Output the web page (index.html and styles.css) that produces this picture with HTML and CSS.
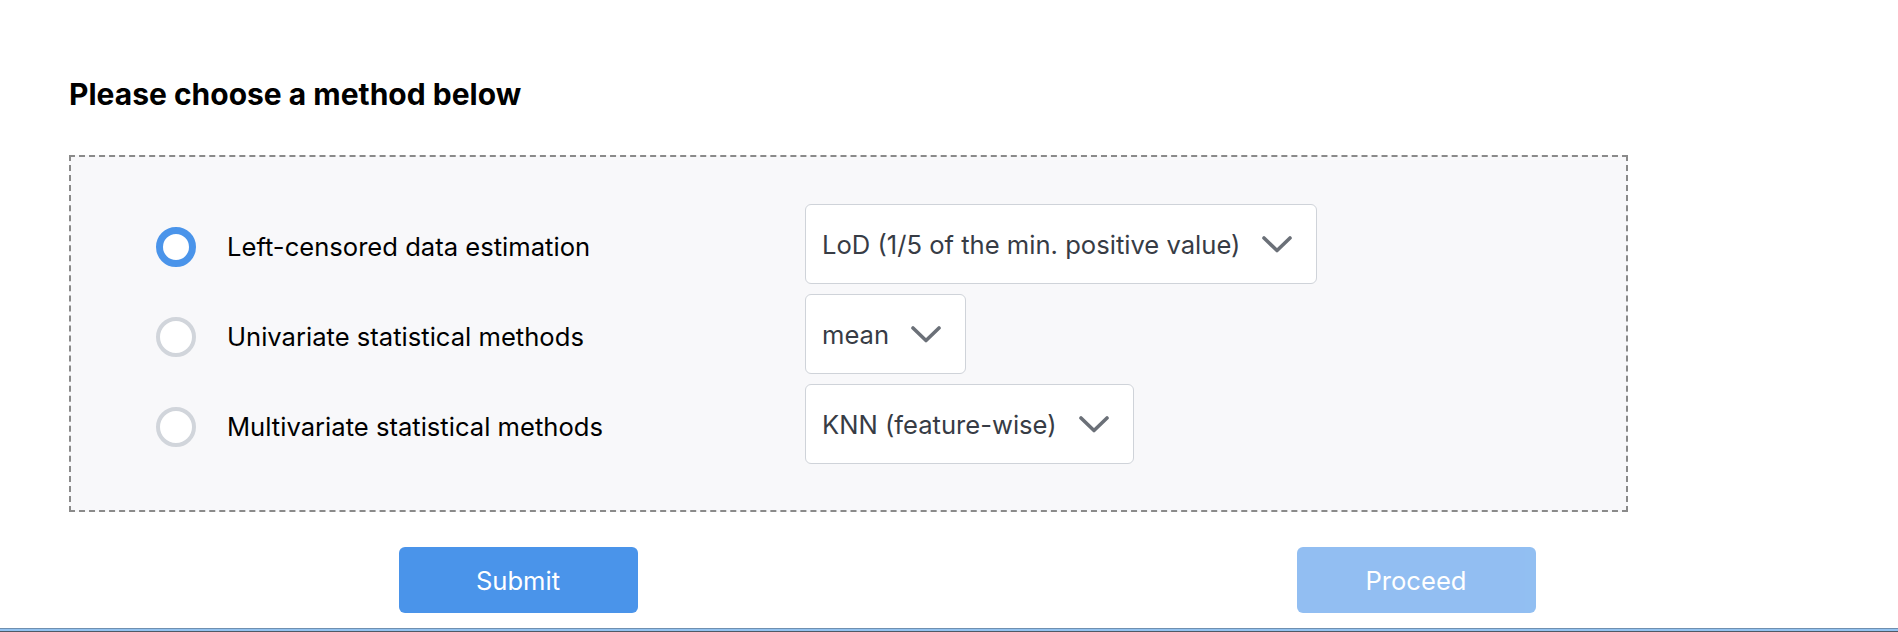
FILE: index.html
```html
<!DOCTYPE html>
<html lang="en">
<head>
    <meta charset="UTF-8">
    <meta name="viewport" content="width=device-width, initial-scale=1.0">
    <title>Imputation Method</title>
    <link rel="stylesheet" href="styles.css">
</head>
<body>
    <main class="page">
        <h3 class="title">Please choose a method below</h3>

        <div class="methods">
            <div class="method">
                <label class="option">
                    <input type="radio" name="method" value="left" checked>
                    <span>Left-censored data estimation</span>
                </label>
                <div class="select">
                    <span>LoD (1/5 of the min. positive value)</span>
                    <svg class="chevron" viewBox="0 0 30 17"><polyline points="2,2 15,14.5 28,2"/></svg>
                </div>
            </div>
            <div class="method">
                <label class="option">
                    <input type="radio" name="method" value="univariate">
                    <span>Univariate statistical methods</span>
                </label>
                <div class="select">
                    <span>mean</span>
                    <svg class="chevron" viewBox="0 0 30 17"><polyline points="2,2 15,14.5 28,2"/></svg>
                </div>
            </div>
            <div class="method">
                <label class="option">
                    <input type="radio" name="method" value="multivariate">
                    <span>Multivariate statistical methods</span>
                </label>
                <div class="select">
                    <span>KNN (feature-wise)</span>
                    <svg class="chevron" viewBox="0 0 30 17"><polyline points="2,2 15,14.5 28,2"/></svg>
                </div>
            </div>
        </div>

        <div class="actions">
            <button type="button" class="btn">Submit</button>
            <button type="button" class="btn" disabled>Proceed</button>
        </div>
    </main>
    <div class="footer-bar"></div>
</body>
</html>
```
FILE: styles.css
```css
body {
    margin: 0;
    font-family: Inter, "Noto Sans", sans-serif;
    font-size: 25.6px;
    color: #000;
    background-color: #fff;
}

.page {
    padding-left: 69px;
}

.title {
    margin: 0;
    padding-top: 76px;
    margin-bottom: 43px;
    font-size: 30px;
    line-height: 36px;
    font-weight: 700;
}

.methods {
    width: 1559px;
    box-sizing: border-box;
    padding: 47px 0 46px 85px;
    border: 2px dashed #8a8a8a;
    background-color: #f8f8fa;
    display: flex;
    flex-direction: column;
    gap: 10px;
}

.method {
    display: grid;
    grid-template-columns: 649px auto;
    align-items: center;
    height: 80px;
}

.option {
    display: flex;
    align-items: center;
    gap: 31px;
    padding-top: 5px;
}

.option input {
    appearance: none;
    margin: 0;
    width: 40px;
    height: 40px;
    border-radius: 50%;
    border: 4px solid #d1d5db;
    background-color: #fff;
    box-sizing: border-box;
}

.option input:checked {
    border: 7px solid #4a94ea;
}

.select {
    justify-self: start;
    display: flex;
    align-items: center;
    gap: 22px;
    height: 80px;
    box-sizing: border-box;
    padding: 0 24px 0 16px;
    border: 1px solid #cfd3d9;
    border-radius: 6px;
    background-color: #fff;
    color: #373c45;
}

.chevron {
    width: 30px;
    height: 17px;
    fill: none;
    stroke: #6b7078;
    stroke-width: 3.6;
    stroke-linecap: round;
    stroke-linejoin: round;
}

.actions {
    margin-top: 35px;
    width: 1796px;
    display: grid;
    grid-template-columns: 1fr 1fr;
    justify-items: center;
}

.btn {
    width: 239px;
    height: 66px;
    border: none;
    border-radius: 6px;
    background-color: #4a94ea;
    color: #fff;
    font-family: inherit;
    font-size: 25.6px;
    cursor: pointer;
}

.btn:disabled {
    opacity: 0.6;
    cursor: default;
}

.footer-bar {
    margin-top: 15px;
    height: 2px;
    border-top: 1px solid #6f8fb0;
    border-bottom: 1px solid #4f5a66;
    background-color: #93c2ef;
}
```
